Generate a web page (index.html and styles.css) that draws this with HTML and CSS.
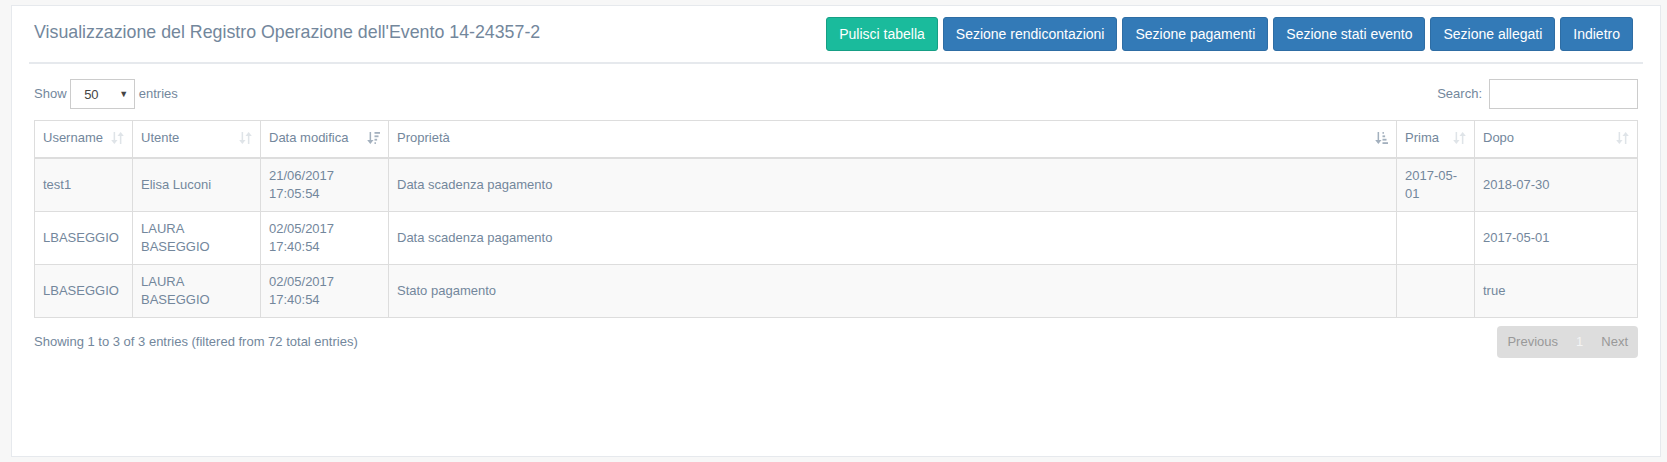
FILE: index.html
```html
<!DOCTYPE html>
<html lang="it">
<head>
    <meta charset="UTF-8">
    <meta name="viewport" content="width=device-width, initial-scale=1.0">
    <title>Registro Operazione</title>
    <link rel="stylesheet" href="styles.css">
</head>
<body>

<div class="page">
    <div class="x-panel">

        <div class="x-title">
            <h2>Visualizzazione del Registro Operazione dell'Evento 14-24357-2</h2>
            <div class="title-actions">
                <button class="btn btn-success">Pulisci tabella</button>
                <button class="btn btn-primary">Sezione rendicontazioni</button>
                <button class="btn btn-primary">Sezione pagamenti</button>
                <button class="btn btn-primary">Sezione stati evento</button>
                <button class="btn btn-primary">Sezione allegati</button>
                <button class="btn btn-primary">Indietro</button>
            </div>
        </div>

        <div class="x-content">
            <div class="dt-toolbar">
                <label class="dt-length">Show <span class="fake-select"><span class="fake-select-value">50</span><span class="fake-select-arrow">&#9660;</span></span> entries</label>
                <label class="dt-filter">Search:<input type="search" class="search-input"></label>
            </div>

            <table class="dt-table">
                <colgroup>
                    <col class="col-username">
                    <col class="col-utente">
                    <col class="col-data">
                    <col>
                    <col class="col-prima">
                    <col class="col-dopo">
                </colgroup>
                <thead>
                    <tr>
                        <th><svg class="sort-icon" viewBox="0 0 13 12"><path d="M2.6 0H4.1V8H6.5L3.35 12L0.2 8H2.6Z"/><path d="M8.9 12H10.4V4H12.8L9.65 0L6.5 4H8.9Z"/></svg>Username</th>
                        <th><svg class="sort-icon" viewBox="0 0 13 12"><path d="M2.6 0H4.1V8H6.5L3.35 12L0.2 8H2.6Z"/><path d="M8.9 12H10.4V4H12.8L9.65 0L6.5 4H8.9Z"/></svg>Utente</th>
                        <th><svg class="sort-icon sorted" viewBox="0 0 13 12"><path d="M2.6 0H4.1V8H6.5L3.35 12L0.2 8H2.6Z"/><rect x="7.5" y="0" width="5.5" height="1.8"/><rect x="7.5" y="3.4" width="4" height="1.8"/><rect x="7.5" y="6.8" width="2.6" height="1.8"/><rect x="7.5" y="10.2" width="1.4" height="1.8"/></svg>Data modifica</th>
                        <th><svg class="sort-icon sorted" viewBox="0 0 13 12"><path d="M2.6 0H4.1V8H6.5L3.35 12L0.2 8H2.6Z"/><rect x="7.5" y="0" width="1.4" height="1.8"/><rect x="7.5" y="3.4" width="2.6" height="1.8"/><rect x="7.5" y="6.8" width="4" height="1.8"/><rect x="7.5" y="10.2" width="5.5" height="1.8"/></svg>Proprietà</th>
                        <th><svg class="sort-icon" viewBox="0 0 13 12"><path d="M2.6 0H4.1V8H6.5L3.35 12L0.2 8H2.6Z"/><path d="M8.9 12H10.4V4H12.8L9.65 0L6.5 4H8.9Z"/></svg>Prima</th>
                        <th><svg class="sort-icon" viewBox="0 0 13 12"><path d="M2.6 0H4.1V8H6.5L3.35 12L0.2 8H2.6Z"/><path d="M8.9 12H10.4V4H12.8L9.65 0L6.5 4H8.9Z"/></svg>Dopo</th>
                    </tr>
                </thead>
                <tbody>
                    <tr>
                        <td>test1</td>
                        <td>Elisa Luconi</td>
                        <td>21/06/2017 17:05:54</td>
                        <td>Data scadenza pagamento</td>
                        <td>2017-05-01</td>
                        <td>2018-07-30</td>
                    </tr>
                    <tr>
                        <td>LBASEGGIO</td>
                        <td>LAURA BASEGGIO</td>
                        <td>02/05/2017 17:40:54</td>
                        <td>Data scadenza pagamento</td>
                        <td></td>
                        <td>2017-05-01</td>
                    </tr>
                    <tr>
                        <td>LBASEGGIO</td>
                        <td>LAURA BASEGGIO</td>
                        <td>02/05/2017 17:40:54</td>
                        <td>Stato pagamento</td>
                        <td></td>
                        <td>true</td>
                    </tr>
                </tbody>
            </table>

            <div class="dt-footer">
                <div class="dt-info">Showing 1 to 3 of 3 entries (filtered from 72 total entries)</div>
                <ul class="pagination">
                    <li class="page-prev">Previous</li>
                    <li class="page-current">1</li>
                    <li class="page-next">Next</li>
                </ul>
            </div>
        </div>

    </div>
</div>

</body>
</html>
```

FILE: styles.css
```css
* {
    box-sizing: border-box;
}

body {
    margin: 0;
    background-color: #F7F7F7;
    font-family: "Liberation Sans", Arial, sans-serif;
    font-size: 13px;
    line-height: 1.42857;
    color: #73879C;
}

.page {
    padding: 5px 6px 0 11px;
}

.x-panel {
    height: 452px;
    padding: 10px 17px;
    background-color: #fff;
    border: 1px solid #E6E9ED;
}

.x-title {
    display: flex;
    justify-content: space-between;
    align-items: flex-start;
    padding: 1px 10px 11px 5px;
    border-bottom: 2px solid #E6E9ED;
}

.x-title h2 {
    margin: 2px 0 0;
    font-size: 17.8px;
    font-weight: 400;
    line-height: 26px;
    white-space: nowrap;
}

.title-actions {
    display: flex;
    gap: 5px;
}

.btn {
    font-family: "Liberation Sans", Arial, sans-serif;
    font-size: 14px;
    line-height: 20px;
    padding: 6px 12px;
    color: #fff;
    border: 1px solid transparent;
    border-radius: 3px;
    cursor: pointer;
}

.btn-success {
    background-color: #1ABB9C;
    border-color: #169F85;
}

.btn-primary {
    background-color: #337AB7;
    border-color: #2E6DA4;
}

.x-content {
    padding: 0 5px 6px;
}

.dt-toolbar {
    display: flex;
    justify-content: space-between;
    align-items: center;
    height: 30px;
    margin-top: 15px;
}

.dt-length {
    display: flex;
    align-items: center;
    white-space: pre;
}

.fake-select {
    display: flex;
    justify-content: space-between;
    align-items: center;
    width: 65px;
    height: 30px;
    padding: 3px 6px 0 13px;
    border: 1px solid #ccc;
    color: #444;
    font-size: 13px;
}

.fake-select-arrow {
    font-size: 9px;
    color: #444;
    margin-top: -3px;
}

.dt-filter {
    display: flex;
    align-items: center;
}

.search-input {
    width: 149px;
    height: 30px;
    margin: 0 0 0 7px;
    border: 1px solid #ccc;
    border-radius: 0;
    outline: none;
}

.dt-table {
    width: 100%;
    margin-top: 11px;
    border-collapse: collapse;
    table-layout: fixed;
    border: 1px solid #ddd;
    line-height: 18px;
}

.col-username { width: 98px; }
.col-utente { width: 128px; }
.col-data { width: 128px; }
.col-prima { width: 78px; }
.col-dopo { width: 163px; }

.dt-table th,
.dt-table td {
    padding: 8px;
    border: 1px solid #ddd;
    text-align: left;
}

.dt-table th {
    padding-bottom: 10px;
    font-weight: 400;
    white-space: nowrap;
    border-bottom-width: 2px;
}

.dt-table td {
    vertical-align: middle;
}

.dt-table tbody tr:nth-child(odd) {
    background-color: #f9f9f9;
}

.sort-icon {
    float: right;
    width: 13px;
    height: 12px;
    margin-top: 3px;
    fill: #73879C;
    opacity: 0.22;
}

.sort-icon.sorted {
    opacity: 0.65;
}

.dt-footer {
    display: flex;
    justify-content: space-between;
    align-items: flex-start;
    margin-top: 8px;
}

.dt-info {
    padding-top: 7px;
}

.pagination {
    display: flex;
    margin: 0;
    padding: 0;
    list-style: none;
    background-color: #ddd;
    border-radius: 4px;
    line-height: 20px;
}

.pagination li {
    padding: 6px 10px;
    color: #999;
}

.pagination .page-current {
    padding: 6px 8px;
    color: #f4f4f4;
}
```
